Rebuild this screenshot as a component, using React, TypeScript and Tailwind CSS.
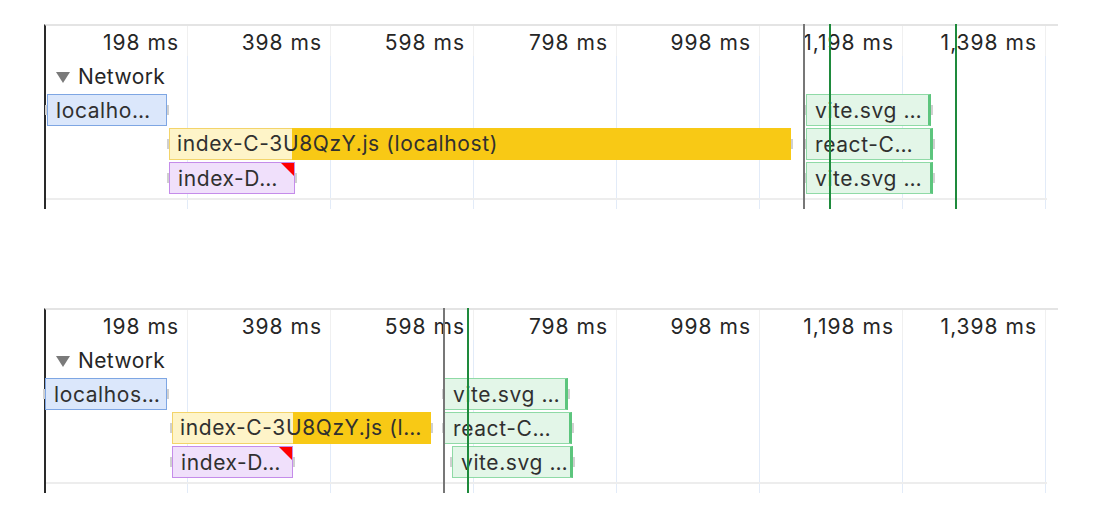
import React from "react";

type Bar = {
  label: string;
  kind: "doc" | "script" | "style" | "image";
  left: number;
  width: number;
  row: number;
  solidFrom?: number;
  flag?: boolean;
};

type PanelProps = {
  bars: Bar[];
  marker: number;
  greens: number[];
};

const ticks = ["198 ms", "398 ms", "598 ms", "798 ms", "998 ms", "1,198 ms", "1,398 ms"];

// left offsets are measured from the panel's outer edge
const topPanel: Bar[] = [
  { label: "localho…", kind: "doc", left: 3, width: 120, row: 0 },
  { label: "index-C-3U8QzY.js (localhost)", kind: "script", left: 125, width: 622, row: 1, solidFrom: 123 },
  { label: "index-D…", kind: "style", left: 125, width: 126, row: 2, flag: true },
  { label: "vite.svg …", kind: "image", left: 762, width: 125, row: 0 },
  { label: "react-C…", kind: "image", left: 762, width: 127, row: 1 },
  { label: "vite.svg …", kind: "image", left: 762, width: 127, row: 2 },
];

const bottomPanel: Bar[] = [
  { label: "localhos…", kind: "doc", left: 1, width: 122, row: 0 },
  { label: "index-C-3U8QzY.js (l…", kind: "script", left: 128, width: 259, row: 1, solidFrom: 121 },
  { label: "index-D…", kind: "style", left: 128, width: 121, row: 2, flag: true },
  { label: "vite.svg …", kind: "image", left: 400, width: 124, row: 0 },
  { label: "react-C…", kind: "image", left: 400, width: 128, row: 1 },
  { label: "vite.svg …", kind: "image", left: 408, width: 121, row: 2 },
];

const kindClass = {
  doc: "bg-[#dbe7fb] border border-[#7ea6e3]",
  script: "bg-[#f8c915]",
  style: "bg-[#f0e0fb] border border-[#c58cea]",
  image: "bg-[#e3f6e8] border border-[#8fdaa6] border-r-[3px] border-r-[#5cc57d]",
};

function Whisker({ x }: { x: number }) {
  return <div className="absolute top-[11px] w-[2px] h-[10px] bg-[#d0d0d0]" style={{ left: x }} />;
}

function TimelineBar({ bar }: { bar: Bar }) {
  const left = bar.left - 2;
  return (
    <>
      <Whisker x={left - 2} />
      <Whisker x={left + bar.width} />
      <div
        className={`absolute top-0 h-[32px] overflow-hidden ${kindClass[bar.kind]}`}
        style={{ left, width: bar.width }}
      >
        {bar.kind === "script" && (
          <div
            className="absolute left-0 top-0 h-full bg-[#fef4c8] border border-[#f3d46a] border-r-0"
            style={{ width: bar.solidFrom }}
          />
        )}
        {bar.flag && (
          <div className="absolute right-0 top-0 w-0 h-0 border-t-[13px] border-t-[#ff0000] border-l-[13px] border-l-transparent" />
        )}
        <span className="relative block pl-[8px] leading-[31px] whitespace-nowrap text-[21px] tracking-[0.6px] text-[#303030]">
          {bar.label}
        </span>
      </div>
    </>
  );
}

function Panel({ bars, marker, greens }: PanelProps) {
  return (
    <div className="relative ml-[44px] w-[1014px] h-[185px] border-t-2 border-t-[#e4e4e4] border-l-2 border-l-[#2a2a2a]">
      {/* time grid */}
      <div className="absolute left-0 top-0 bottom-0 flex">
        {ticks.map((t, i) => (
          <div key={t} className={`flex flex-col ${i === 0 ? "w-[142px]" : "w-[143px]"}`}>
            <div className="h-[30px] pt-[4px] pr-[8px] border-r border-r-[#f0f0f0] text-right text-[21px] leading-[26px] tracking-[1px] text-[#262626] whitespace-nowrap">
              {t}
            </div>
            <div className="flex-1 border-r border-r-[#e2ebf8]" />
          </div>
        ))}
      </div>

      <div className="relative pt-[38px] flex flex-col">
        <div className="flex items-center gap-[8px] h-[26px] pl-[10px]">
          <span className="w-0 h-0 border-l-[7px] border-l-transparent border-r-[7px] border-r-transparent border-t-[11px] border-t-[#7a7a7a]" />
          <span className="text-[21px] tracking-[0.4px] text-[#262626]">Network</span>
        </div>
        <div className="mt-[4px] flex flex-col gap-[2px]">
          {[0, 1, 2].map((r) => (
            <div key={r} className="relative h-[32px]">
              {bars
                .filter((b) => b.row === r)
                .map((b, i) => (
                  <TimelineBar key={i} bar={b} />
                ))}
            </div>
          ))}
        </div>
        <div className="mt-[4px] w-[1001px] h-[2px] bg-[#ededed]" />
      </div>

      {/* markers drawn over the tracks */}
      <div className="absolute -top-[2px] w-[2px] h-[185px] bg-[#777777]" style={{ left: marker - 2 }} />
      {greens.map((g) => (
        <div key={g} className="absolute -top-[2px] w-[2px] h-[185px] bg-[#1e8a3c]" style={{ left: g - 2 }} />
      ))}
    </div>
  );
}

export default function App() {
  return (
    <div className="w-[1100px] h-[520px] bg-white pt-[24px] flex flex-col gap-[99px] font-['Inter','Liberation_Sans',sans-serif]">
      <Panel bars={topPanel} marker={759} greens={[785, 911]} />
      <Panel bars={bottomPanel} marker={399} greens={[423]} />
    </div>
  );
}
